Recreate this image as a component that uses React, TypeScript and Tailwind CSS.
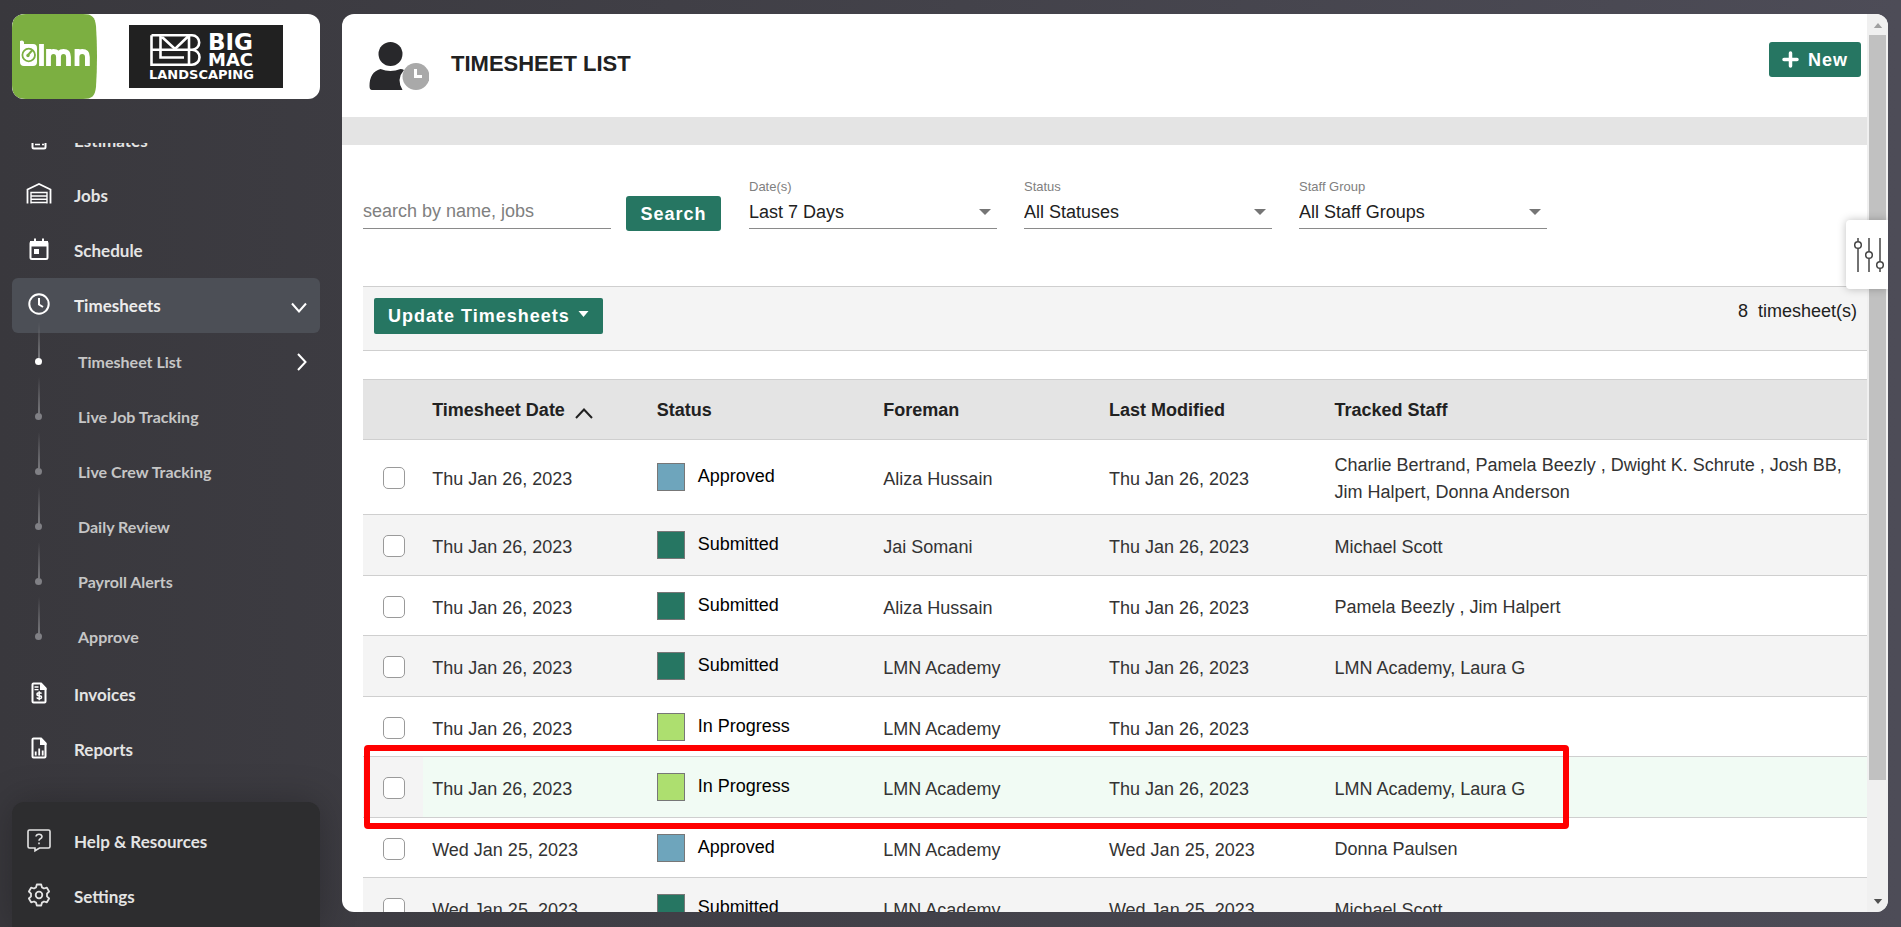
import { useState } from "react";
import type { ReactNode } from "react";

type Status = "Approved" | "Submitted" | "In Progress";

interface Timesheet {
  date: string;
  status: Status;
  foreman: string;
  modified: string;
  staff: string;
}

const timesheets: Timesheet[] = [
  {
    date: "Thu Jan 26, 2023",
    status: "Approved",
    foreman: "Aliza Hussain",
    modified: "Thu Jan 26, 2023",
    staff: "Charlie Bertrand, Pamela Beezly , Dwight K. Schrute , Josh BB, Jim Halpert, Donna Anderson",
  },
  { date: "Thu Jan 26, 2023", status: "Submitted", foreman: "Jai Somani", modified: "Thu Jan 26, 2023", staff: "Michael Scott" },
  { date: "Thu Jan 26, 2023", status: "Submitted", foreman: "Aliza Hussain", modified: "Thu Jan 26, 2023", staff: "Pamela Beezly , Jim Halpert" },
  { date: "Thu Jan 26, 2023", status: "Submitted", foreman: "LMN Academy", modified: "Thu Jan 26, 2023", staff: "LMN Academy, Laura G" },
  { date: "Thu Jan 26, 2023", status: "In Progress", foreman: "LMN Academy", modified: "Thu Jan 26, 2023", staff: "" },
  { date: "Thu Jan 26, 2023", status: "In Progress", foreman: "LMN Academy", modified: "Thu Jan 26, 2023", staff: "LMN Academy, Laura G" },
  { date: "Wed Jan 25, 2023", status: "Approved", foreman: "LMN Academy", modified: "Wed Jan 25, 2023", staff: "Donna Paulsen" },
  { date: "Wed Jan 25, 2023", status: "Submitted", foreman: "LMN Academy", modified: "Wed Jan 25, 2023", staff: "Michael Scott" },
];

const activeRow = 5;

const swatch: Record<Status, string> = {
  Approved: "bg-[#6ea5bc]",
  Submitted: "bg-[#267662]",
  "In Progress": "bg-[#addf6f]",
};

const subItems = ["Timesheet List", "Live Job Tracking", "Live Crew Tracking", "Daily Review", "Payroll Alerts", "Approve"];

function LmnLogo() {
  return (
    <svg viewBox="0 0 85 85" className="h-[85px] w-[85px] shrink-0" role="img" aria-label="lmn">
      <path d="M14 0H71C80 0 83 3 84 12Q86 42 84 73C83 82 80 85 71 85H14C4 85 0 81 0 71V14C0 4 4 0 14 0Z" fill="#7caf41" />
      <path d="M8 27q3-1.500 4 1v2h9q4 0 4 4v14q0 4-4 4h-9q-4 0-4-4z" fill="#fff" />
      <circle cx="16.700" cy="41" r="6.300" fill="none" stroke="#7caf41" strokeWidth="1.800" />
      <path d="M15.500 41.500l5-5.500" fill="none" stroke="#7caf41" strokeWidth="2" />
      <circle cx="16" cy="41.500" r="1.700" fill="#7caf41" />
      <g fill="none" stroke="#fff" strokeWidth="4.800">
        <path d="M29.500 30V52" />
        <path d="M36.500 52V35M36.500 43q0-5.500 5-5.500t5 5.500v9M46.500 43q0-5.500 5-5.500t5 5.500v9" />
        <path d="M65 52V35M65 43q0-5.500 5.200-5.500t5.200 5.500v9" />
      </g>
    </svg>
  );
}

function BigMacLogo() {
  return (
    <svg viewBox="0 0 154 63" className="h-[63px] w-[154px]" role="img" aria-label="Big Mac Landscaping">
      <rect width="154" height="63" fill="#212121" />
      <g fill="none" stroke="#fff" strokeWidth="2.600">
        <path d="M22.500 10.300H63a7.200 7.200 0 0 1 0 14.400H22.500M63 24.700a7.500 7.500 0 0 1 0 15H22.500V10.300" />
        <path d="M31.500 10.300V32.500H55M33 12L46 24 59.500 11M60 10.300V39.700" />
      </g>
      <g fill="#fff" fontFamily="'DejaVu Sans', sans-serif" fontWeight="700">
        <text x="79" y="25" fontSize="23">BIG</text>
        <text x="79" y="41" fontSize="18">MAC</text>
        <text x="20" y="54" fontSize="13">LANDSCAPING</text>
      </g>
    </svg>
  );
}

function NavIcon({ children }: { children: ReactNode }) {
  return (
    <svg viewBox="0 0 26 26" className="h-[26px] w-[26px] shrink-0" fill="none" stroke="#fff" strokeWidth="2" aria-hidden="true">
      {children}
    </svg>
  );
}

const icons = {
  estimates: (
    <NavIcon>
      <rect x="6.500" y="3" width="13" height="19.500" rx="1.500" />
      <path d="M9 18.500h5M16 18.500h2M9 14h8M9 10h8" strokeWidth="1.500" />
    </NavIcon>
  ),
  jobs: (
    <NavIcon>
      <path d="M1.500 22.500V8.500L13 3l11.500 5.500v14" strokeWidth="1.800" />
      <path d="M5 22.500V11.500h16v11M5 15h16M5 18.200h16M5 21.500h16" strokeWidth="1.400" />
    </NavIcon>
  ),
  schedule: (
    <NavIcon>
      <rect x="4.500" y="6" width="17" height="17" rx="1.500" />
      <path d="M9 2.500v4M17 2.500v4" />
      <path d="M4 5h18v5.500H4z" fill="#fff" stroke="none" />
      <path d="M8 13h5v5H8z" fill="#fff" stroke="none" />
    </NavIcon>
  ),
  timesheets: (
    <NavIcon>
      <circle cx="13" cy="13" r="9.700" />
      <path d="M13 7v6.500l4 2.500" />
    </NavIcon>
  ),
  invoices: (
    <NavIcon>
      <path d="M6.500 4.500q0-1 1-1H15l4.500 5V21.500q0 1-1 1h-11q-1 0-1-1z" />
      <path d="M14 3h1.500L20.500 8v2H14z" fill="#fff" stroke="none" />
      <path d="M8.500 7h4M8.500 9.700h4" strokeWidth="1.300" />
      <path d="M15.500 13.700q-.5-1-2.200-1-2.300 0-2.300 1.500t2.200 1.500q2.300 0 2.300 1.600t-2.400 1.500q-1.900 0-2.300-1.200M13.200 11.300v9" strokeWidth="1.500" />
    </NavIcon>
  ),
  reports: (
    <NavIcon>
      <path d="M6.500 4.500q0-1 1-1H15l4.500 5V21.500q0 1-1 1h-11q-1 0-1-1z" />
      <path d="M14 3h1.500L20.500 8v2H14z" fill="#fff" stroke="none" />
      <path d="M9.700 20.500v-4M13.200 20.500V13.500M16.700 20.500v-5" strokeWidth="1.800" />
    </NavIcon>
  ),
  help: (
    <NavIcon>
      <path d="M3.500 3h19q1.500 0 1.500 1.500v15q0 1.500-1.500 1.500H13.500L9 23.800V21H3.500Q2 21 2 19.500v-15Q2 3 3.500 3z" stroke="#e4e4e4" strokeWidth="1.600" />
      <path d="M10 9.500q.3-2.300 3-2.300t3 2.300q0 1.500-1.700 2.300-1.300.7-1.300 2M13 15.500v1.700" stroke="#e4e4e4" strokeWidth="1.600" />
    </NavIcon>
  ),
  settings: (
    <NavIcon>
      <path
        d="M10.800 2.500h4.400l.8 2.900 2 1.100 2.900-.8 2.200 3.800-2.100 2.100v2.800l2.100 2.100-2.200 3.800-2.900-.8-2 1.100-.8 2.900h-4.400l-.8-2.900-2-1.100-2.900.8-2.200-3.800L5 14.400v-2.800L2.900 9.500l2.200-3.800 2.900.8 2-1.100z"
        stroke="#e4e4e4"
        strokeWidth="1.800"
        strokeLinejoin="round"
      />
      <circle cx="13" cy="13" r="3.300" stroke="#e4e4e4" strokeWidth="1.800" />
    </NavIcon>
  ),
};

function NavItem({ icon, label, active = false }: { icon: ReactNode; label: string; active?: boolean }) {
  return (
    <a
      href="#"
      className={
        active
          ? "flex h-[55px] items-center rounded-md bg-[#4c4f56] pl-[14px] pr-3 text-[#ececec]"
          : "flex h-[55px] items-center rounded-md pl-[14px] pr-3 text-[#e4e4e4]"
      }
    >
      <span className="pb-1">{icon}</span>
      <span className="ml-[22px] grow">{label}</span>
      {active && (
        <svg viewBox="0 0 18 12" className="mt-1 h-3 w-[18px]" fill="none" stroke="#fff" strokeWidth="2" aria-hidden="true">
          <path d="M2 1.500l7 8 7-8" />
        </svg>
      )}
    </a>
  );
}

function SubItem({ label, current }: { label: string; current: boolean }) {
  return (
    <a href="#" className="flex h-[55px] items-center pl-[23px] pr-[13px] text-base text-[#c6c6c6]">
      <span className="flex h-full w-[7px] flex-col items-center self-start">
        <span className="-mt-3 h-9 w-[2px] shrink-0 bg-linear-to-b from-transparent to-[#77777b]" />
        <span className={current ? "h-[7px] w-[7px] shrink-0 rounded-full bg-white" : "h-[7px] w-[7px] shrink-0 rounded-full bg-[#808085]"} />
      </span>
      <span className="ml-9 grow">{label}</span>
      {current && (
        <svg viewBox="0 0 10 18" className="h-[18px] w-[10px]" fill="none" stroke="#fff" strokeWidth="2" aria-hidden="true">
          <path d="M1 1l7.500 8L1 17" />
        </svg>
      )}
    </a>
  );
}

function Sidebar() {
  return (
    <aside className="flex w-[342px] shrink-0 flex-col pl-3 pr-[22px] pt-[14px] font-['Lato',sans-serif] text-[17px] font-bold">
      <div className="flex h-[85px] shrink-0 items-center overflow-hidden rounded-xl bg-white">
        <LmnLogo />
        <div className="flex grow justify-center pr-[6px]">
          <BigMacLogo />
        </div>
      </div>
      <nav className="mt-11 flex min-h-0 grow flex-col justify-start overflow-hidden" aria-label="Main">
        <div className="-mt-[30px]">
          <NavItem icon={icons.estimates} label="Estimates" />
          <NavItem icon={icons.jobs} label="Jobs" />
          <NavItem icon={icons.schedule} label="Schedule" />
          <NavItem icon={icons.timesheets} label="Timesheets" active />
          <div className="mb-[3px] mt-px">
            {subItems.map((label, i) => (
              <SubItem key={label} label={label} current={i === 0} />
            ))}
          </div>
          <NavItem icon={icons.invoices} label="Invoices" />
          <NavItem icon={icons.reports} label="Reports" />
        </div>
      </nav>
      <div className="h-[125px] shrink-0 rounded-t-xl bg-[#2d2d2f] pt-3 shadow-[0_0_36px_rgba(0,0,0,0.25)]">
        <NavItem icon={icons.help} label="Help & Resources" />
        <NavItem icon={icons.settings} label="Settings" />
      </div>
    </aside>
  );
}

function FilterSelect({ id, label, value }: { id: string; label: string; value: string }) {
  return (
    <div className="flex w-[248px] flex-col">
      <label htmlFor={id} className="text-[13px] leading-[17px] text-[#808080]">
        {label}
      </label>
      <div className="flex items-center border-b border-[#8a8a8a]">
        <select id={id} className="h-[33px] grow appearance-none bg-transparent text-lg text-[#212121] outline-none">
          <option>{value}</option>
        </select>
        <svg viewBox="0 0 12 6" className="mr-[6px] h-[6px] w-3" fill="#757575" aria-hidden="true">
          <path d="M0 0h12L6 6z" />
        </svg>
      </div>
    </div>
  );
}

function PageHeader() {
  return (
    <header className="flex h-[103px] shrink-0 items-start justify-between pl-[27px] pr-[6px] pt-7">
      <div className="flex items-start">
        <svg viewBox="0 0 60 48" className="h-12 w-[60px]" aria-hidden="true">
          <circle cx="21.500" cy="12" r="12" fill="#28282b" />
          <path d="M11.500 27q10 4 20 0 2 0 3.500 1-8 9-1.500 20H3q-2.500 0-2.500-4 0-14 11-17z" fill="#28282b" />
          <circle cx="47" cy="34.500" r="13.500" fill="#a9a9a9" />
          <path d="M46.500 27v7.500h6.500" fill="none" stroke="#fff" strokeWidth="3" />
        </svg>
        <h1 className="ml-[22px] text-[22px] font-bold leading-[44px] text-[#212121]">TIMESHEET LIST</h1>
      </div>
      <button className="flex h-[35px] items-center rounded-[3px] bg-[#267662] px-[13px] text-lg font-bold tracking-[1px] text-white">
        <svg viewBox="0 0 17 17" className="mr-[9px] h-[17px] w-[17px]" fill="none" stroke="#fff" strokeWidth="3.500" strokeLinecap="round" aria-hidden="true">
          <path d="M8.500 2v13M2 8.500h13" />
        </svg>
        New
      </button>
    </header>
  );
}

function Filters() {
  return (
    <form className="flex h-[141px] shrink-0 items-start gap-[27px] pl-[21px] pt-[33px]" onSubmit={(e) => e.preventDefault()}>
      <div className="flex items-start gap-[15px] pr-px pt-[17px]">
        <input
          aria-label="search by name, jobs"
          placeholder="search by name, jobs"
          className="h-[34px] w-[248px] border-b border-[#8a8a8a] text-lg outline-none placeholder:text-[#808080]"
        />
        <button className="mt-px h-[35px] w-[95px] rounded-[3px] bg-[#267662] text-lg font-bold tracking-[1px] text-white">Search</button>
      </div>
      <FilterSelect id="dates" label="Date(s)" value="Last 7 Days" />
      <FilterSelect id="status" label="Status" value="All Statuses" />
      <FilterSelect id="group" label="Staff Group" value="All Staff Groups" />
    </form>
  );
}

function TimesheetTable() {
  const [checked, setChecked] = useState<number[]>([]);
  const toggle = (i: number) => setChecked((c) => (c.includes(i) ? c.filter((x) => x !== i) : [...c, i]));

  return (
    <div className="relative ml-[21px] mt-7">
      <table className="w-full table-fixed border-collapse text-left text-lg text-[#333]">
        <colgroup>
          <col className="w-[4%]" />
          <col className="w-[15%]" />
          <col className="w-[15%]" />
          <col className="w-[15%]" />
          <col className="w-[15%]" />
          <col />
        </colgroup>
        <thead>
          <tr className="h-[60px] border-y border-[#cfcfcf] bg-[#e4e4e4] text-[#212121]">
            <td />
            <th className="px-[9px]">
              <span className="flex items-center gap-[10px]">
                Timesheet Date
                <svg viewBox="0 0 18 11" className="mt-2 h-[11px] w-[18px]" fill="none" stroke="#212121" strokeWidth="2" aria-hidden="true">
                  <path d="M1 10l8-8.500L17 10" />
                </svg>
              </span>
            </th>
            <th className="px-2">Status</th>
            <th className="px-[9px]">Foreman</th>
            <th className="px-[9px]">Last Modified</th>
            <th className="px-[9px]">Tracked Staff</th>
          </tr>
        </thead>
        <tbody>
          {timesheets.map((t, i) => (
            <tr key={i} className="h-[60px] border-b border-[#cfcfcf] first:h-[75px] even:h-[61px] even:bg-[#f4f4f4]">
              <td className="pl-5">
                <input
                  type="checkbox"
                  aria-label={`Select timesheet ${i + 1}`}
                  checked={checked.includes(i)}
                  onChange={() => toggle(i)}
                  className="mt-[2px] block h-[22px] w-[22px] appearance-none rounded-[5px] border border-[#9a9a9a] bg-white checked:bg-[#267662]"
                />
              </td>
              <td className={i === activeRow ? "bg-[#f1fbf4] px-[9px] pt-1" : "px-[9px] pt-1"}>{t.date}</td>
              <td className={i === activeRow ? "bg-[#f1fbf4] px-2 text-black" : "px-2 text-black"}>
                <span className="flex items-center">
                  <span className={`mr-[13px] h-7 w-7 shrink-0 border border-[#777] ${swatch[t.status]}`} />
                  <span className="pb-[2px]">{t.status}</span>
                </span>
              </td>
              <td className={i === activeRow ? "bg-[#f1fbf4] px-[9px] pt-1" : "px-[9px] pt-1"}>{t.foreman}</td>
              <td className={i === activeRow ? "bg-[#f1fbf4] px-[9px] pt-1" : "px-[9px] pt-1"}>{t.modified}</td>
              <td className={i === activeRow ? "bg-[#f1fbf4] px-[9px] pt-1 leading-[27px]" : "px-[9px] pt-1 leading-[27px]"}>{t.staff}</td>
            </tr>
          ))}
        </tbody>
      </table>
      <div className="pointer-events-none absolute left-px right-[298px] top-[366px] h-[84px] rounded-[4px] border-[6px] border-[#ff0000]" />
    </div>
  );
}

function Scrollbar() {
  return (
    <div className="flex w-[21px] shrink-0 flex-col items-center bg-[#f0f0f0]" aria-hidden="true">
      <svg viewBox="0 0 10 6" className="mb-[7px] mt-[9px] h-[5px] w-[10px] shrink-0" fill="#a0a0a0">
        <path d="M5 0l5 6H0z" />
      </svg>
      <div className="h-[83%] w-[17px] bg-[#c1c1c1]" />
      <svg viewBox="0 0 10 6" className="mb-2 mt-auto h-[5px] w-[10px] shrink-0" fill="#505050">
        <path d="M5 6L0 0h10z" />
      </svg>
    </div>
  );
}

export default function App() {
  return (
    <div className="flex h-screen overflow-hidden bg-linear-to-r from-[#39383d] to-[#4d4c57] font-['Liberation_Sans',Arial,sans-serif]">
      <Sidebar />
      <main className="relative mb-[15px] mr-[13px] mt-[14px] flex min-w-0 grow overflow-hidden rounded-xl bg-white">
        <div className="flex min-w-0 grow flex-col overflow-hidden">
          <PageHeader />
          <div className="h-7 shrink-0 bg-[#e4e4e4]" />
          <Filters />
          <section className="ml-[21px] flex h-[65px] shrink-0 items-start justify-between border-y border-[#cfcfcf] bg-[#f4f4f4] pl-[11px] pr-[10px] pt-[11px]">
            <button className="flex h-9 items-center rounded-[2px] bg-[#267662] px-[14px] text-lg font-bold tracking-[1px] text-white">
              Update Timesheets
              <svg viewBox="0 0 10 6" className="mb-1 ml-2 h-[6px] w-[11px]" fill="#fff" aria-hidden="true">
                <path d="M0 0h10L5 6z" />
              </svg>
            </button>
            <p className="flex gap-[10px] text-lg leading-[27px] text-[#212121]">
              <span>8</span>
              <span>timesheet(s)</span>
            </p>
          </section>
          <TimesheetTable />
        </div>
        <Scrollbar />
        <button
          aria-label="Filter options"
          className="absolute right-0 top-[206px] flex h-[69px] w-[42px] items-center justify-center rounded-l bg-white pl-[3px] shadow-[0_0_8px_rgba(0,0,0,0.25)]"
        >
          <svg viewBox="0 0 30 34" className="h-[34px] w-[30px]" fill="none" stroke="#444" strokeWidth="1.500" aria-hidden="true">
            <path d="M4 0v3.500M4 10.500V34M15 0v13.500M15 20.500V34M26 0v23.500M26 30.500V34" />
            <circle cx="4" cy="7" r="3.300" />
            <circle cx="15" cy="17" r="3.300" />
            <circle cx="26" cy="27" r="3.300" />
          </svg>
        </button>
      </main>
    </div>
  );
}
